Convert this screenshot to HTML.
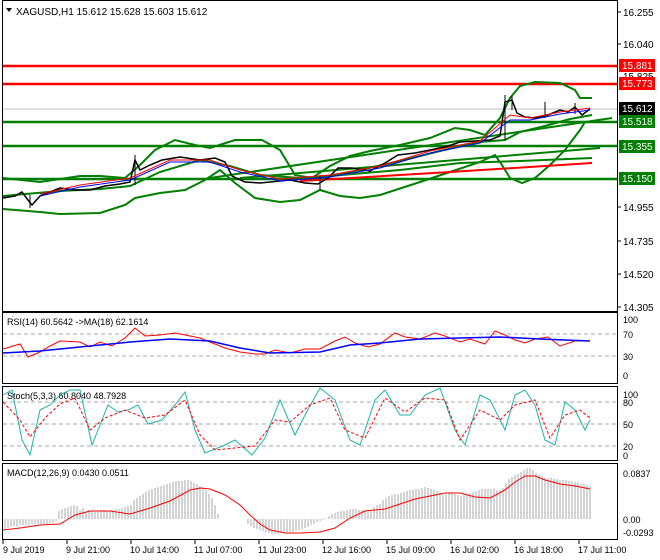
<!DOCTYPE html>
<html><head><meta charset="utf-8"><style>
html,body{margin:0;padding:0;background:#fff;}
svg{display:block;font-family:"Liberation Sans",sans-serif;}
</style></head><body>
<svg width="660" height="560" viewBox="0 0 660 560" xmlns="http://www.w3.org/2000/svg">
<rect width="660" height="560" fill="#fff"/>
<!-- panel frames -->
<g fill="none" stroke="#000" stroke-width="1">
<rect x="2.5" y="0.5" width="615" height="311"/>
<rect x="2.5" y="312.5" width="615" height="71"/>
<rect x="2.5" y="386.5" width="615" height="74"/>
<rect x="2.5" y="463.5" width="615" height="76"/>
</g>
<!-- price axis ticks -->
<g stroke="#000">
<line x1="618" y1="12" x2="621" y2="12"/><line x1="618" y1="44" x2="621" y2="44"/>
<line x1="618" y1="207" x2="621" y2="207"/><line x1="618" y1="241" x2="621" y2="241"/>
<line x1="618" y1="274" x2="621" y2="274"/><line x1="618" y1="307" x2="621" y2="307"/>
</g>
<g font-size="10" fill="#000">
<text x="623" y="16">16.255</text><text x="623" y="48">16.040</text>
<text x="623" y="80">15.825</text>
<text x="623" y="211">14.955</text><text x="623" y="245">14.735</text>
<text x="623" y="278">14.520</text><text x="623" y="311">14.305</text>
</g>
<!-- header -->
<path d="M6 8 L12 8 L9 12 Z" fill="#000"/>
<text x="16" y="15" font-size="10">XAGUSD,H1  15.612 15.628 15.603 15.612</text>
<!-- horizontal levels -->
<line x1="3" y1="109" x2="617" y2="109" stroke="#c0c0c0"/>
<g stroke-width="2.5">
<line x1="3" y1="66" x2="617" y2="66" stroke="#f00"/>
<line x1="3" y1="84" x2="617" y2="84" stroke="#f00"/>
<line x1="3" y1="122" x2="617" y2="122" stroke="#007f00"/>
<line x1="3" y1="146" x2="617" y2="146" stroke="#007f00"/>
<line x1="3" y1="179" x2="617" y2="179" stroke="#007f00"/>
</g>
<!-- price labels -->
<rect x="619" y="59" width="36" height="13" fill="#f00"/><text x="622" y="69" font-size="10" fill="#fff">15.881</text>
<rect x="619" y="77" width="36" height="13" fill="#f00"/><text x="622" y="87" font-size="10" fill="#fff">15.773</text>
<rect x="619" y="102" width="36" height="13" fill="#000"/><text x="622" y="112" font-size="10" fill="#fff">15.612</text>
<rect x="619" y="115" width="36" height="13" fill="#007f00"/><text x="622" y="125" font-size="10" fill="#fff">15.518</text>
<rect x="619" y="140" width="36" height="13" fill="#007f00"/><text x="622" y="150" font-size="10" fill="#fff">15.355</text>
<rect x="619" y="172" width="36" height="13" fill="#007f00"/><text x="622" y="182" font-size="10" fill="#fff">15.150</text>
<!-- bollinger -->
<g fill="none" stroke="#007f00" stroke-width="2">
<path d="M3,178 L40,182 L80,176 L100,176 L125,178 L140,165 L155,150 L175,140 L195,145 L210,148 L235,140 L262,140 L280,150 L295,175 L312,178 L330,166 L350,156 L370,151 L400,145 L430,138 L455,128 L470,130 L485,135 L500,118 L510,98 L520,86 L535,82 L560,83 L575,90 L580,98 L592,98"/>
<path d="M3,209 L40,212 L60,214 L100,213 L125,205 L135,198 L160,193 L185,190 L205,180 L220,170 L235,183 L255,198 L280,202 L300,200 L320,190 L340,196 L360,198 L380,195 L420,182 L450,172 L480,162 L495,155 L502,165 L510,178 L522,183 L535,178 L550,165 L565,150 L580,130 L585,122"/>
<path d="M3,196 L60,191 L100,189 L130,186 L160,172 L200,160 L230,166 L260,175 L300,178 L330,176 L360,170 L400,161 L440,151 L480,142 L505,140 L520,132 L545,126 L570,119 L592,115"/>
<path d="M210,178 L612,118"/>
<path d="M240,178 L600,148"/>
<path d="M330,176 L400,170 L460,163 L520,161 L592,158"/>
</g>
<path d="M300,181 L450,172 L592,163" fill="none" stroke="#f00" stroke-width="2"/>
<!-- price candles approx -->
<path d="M3,198 L15,196 L22,192 L28,200 L32,205 L40,196 L50,192 L60,188 L75,190 L90,190 L105,186 L120,184 L130,182 L135,160 L140,170 L150,165 L162,160 L180,157 L200,160 L215,158 L225,162 L232,176 L245,182 L260,183 L290,180 L305,183 L318,184 L328,178 L338,168 L352,168 L370,171 L385,163 L398,155 L415,153 L430,150 L445,147 L460,142 L475,141 L490,140 L500,136 L505,102 L512,100 L517,113 L525,117 L535,118 L548,115 L560,110 L568,112 L575,107 L582,115 L590,109" fill="none" stroke="#000" stroke-width="1.5"/>
<path d="M30,208 V195 M135,185 V155 M320,190 V175 M505,140 V95 M512,110 V96 M545,118 V102 M575,114 V103" stroke="#000"/>
<path d="M40,196 L80,187 L130,180 L170,162 L210,162 L240,172 L280,181 L330,177 L380,168 L430,153 L480,143 L510,120 L530,120 L560,114 L590,110" fill="none" stroke="#00f"/>
<path d="M40,194 L80,185 L130,178 L170,160 L210,160 L240,170 L280,179 L330,175 L380,166 L430,151 L480,141 L510,115 L530,118 L560,112 L590,108" fill="none" stroke="#f00"/>
<!-- RSI -->
<text x="7" y="325" font-size="9">RSI(14) 60.5642  -&gt;MA(18) 62.1614</text>
<g stroke="#aaa" stroke-dasharray="4,3"><line x1="3" y1="334" x2="617" y2="334"/><line x1="3" y1="356" x2="617" y2="356"/></g>
<g font-size="9"><text x="623" y="323">100</text><text x="623" y="338">70</text><text x="623" y="360">30</text><text x="623" y="379">0</text></g>
<path d="M3,349 L20,344 L28,357 L40,352 L50,346 L60,341 L80,342 L90,347 L100,342 L112,346 L125,338 L135,328 L145,336 L160,335 L175,333 L190,336 L200,338 L215,344 L225,348 L240,352 L255,354 L265,354 L275,350 L290,353 L305,349 L320,349 L335,341 L345,337 L355,343 L368,347 L380,344 L395,333 L405,337 L420,339 L435,333 L445,336 L460,342 L470,339 L485,344 L495,331 L505,335 L515,340 L525,343 L535,339 L548,337 L560,346 L575,341 L590,341" fill="none" stroke="#f00"/>
<path d="M3,353 L40,351 L80,347 L130,342 L170,339 L210,341 L240,348 L270,353 L320,352 L350,345 L380,343 L420,339 L460,338 L500,337 L540,339 L590,341" fill="none" stroke="#00f" stroke-width="1.5"/>
<!-- Stoch -->
<text x="7" y="399" font-size="9">Stoch(5,3,3) 60.8040 48.7928</text>
<g stroke="#aaa" stroke-dasharray="4,3"><line x1="3" y1="402" x2="617" y2="402"/><line x1="3" y1="424" x2="617" y2="424"/><line x1="3" y1="446" x2="617" y2="446"/></g>
<g font-size="9"><text x="623" y="398">100</text><text x="623" y="406">80</text><text x="623" y="428">50</text><text x="623" y="450">20</text><text x="623" y="459">0</text></g>
<path d="M3,395 L12,390 L22,440 L30,455 L40,410 L50,405 L60,395 L70,390 L80,390 L92,445 L100,425 L108,405 L118,412 L128,410 L138,405 L148,424 L162,420 L175,405 L185,392 L195,430 L205,453 L215,449 L225,445 L235,440 L252,455 L265,438 L280,400 L295,435 L305,415 L320,388 L335,400 L350,440 L360,445 L375,400 L385,390 L400,415 L410,415 L425,395 L440,388 L455,430 L465,445 L480,395 L490,400 L505,430 L515,395 L525,390 L535,405 L545,440 L555,445 L565,402 L575,410 L585,430 L590,420" fill="none" stroke="#20b2aa"/>
<path d="M3,402 L20,420 L30,437 L45,418 L60,404 L75,398 L90,430 L105,418 L125,410 L145,418 L165,415 L185,400 L200,435 L215,450 L235,448 L255,446 L275,420 L290,422 L310,405 L330,398 L345,430 L365,438 L385,398 L405,412 L425,398 L445,400 L460,440 L480,410 L500,420 L515,405 L535,400 L550,438 L565,415 L580,410 L590,418" fill="none" stroke="#f00" stroke-dasharray="3,2"/>
<!-- MACD -->
<text x="7" y="476" font-size="9">MACD(12,26,9) 0.0430 0.0511</text>
<g font-size="9"><text x="623" y="477">0.0837</text><text x="623" y="523">0.00</text><text x="623" y="536">-0.0293</text></g>
<path id="h" d="M5,519V530M8,519V528M11,519V527M14,519V526M17,519V526M20,519V525M23,519V525M26,519V525M29,519V525M32,519V524M35,519V524M38,519V524M41,519V524M44,519V524M47,519V524M50,519V523M53,519V523M56,519V521M59,519V511M62,519V509M65,519V508M68,519V507M71,519V506M74,519V505M77,519V506M80,519V510M83,519V508M86,519V512M89,519V510M92,519V511M95,519V512M98,519V511M101,519V510M104,519V510M107,519V511M110,519V510M113,519V510M116,519V509M119,519V509M122,519V508M125,519V507M128,519V506M131,519V505M134,519V500M137,519V498M140,519V496M143,519V494M146,519V492M149,519V490M152,519V489M155,519V488M158,519V487M161,519V486M164,519V485M167,519V484M170,519V483M173,519V482M176,519V481M179,519V481M182,519V481M185,519V480M188,519V480M191,519V481M194,519V483M197,519V484M200,519V486M203,519V487M206,519V490M209,519V494M212,519V498M215,519V505M218,519V514M221,519V519M248,519V524M251,519V526M254,519V528M257,519V529M260,519V530M263,519V531M266,519V532M269,519V533M272,519V534M275,519V534M278,519V533M281,519V533M284,519V533M287,519V532M290,519V532M293,519V532M296,519V531M299,519V530M302,519V529M305,519V528M308,519V527M311,519V525M314,519V524M317,519V522M320,519V521M323,519V520M326,519V518M329,519V516M332,519V514M335,519V513M338,519V512M341,519V511M344,519V511M347,519V510M350,519V509M353,519V509M356,519V509M359,519V510M362,519V510M365,519V510M368,519V511M371,519V510M374,519V507M377,519V505M380,519V504M383,519V500M386,519V498M389,519V496M392,519V495M395,519V494M398,519V494M401,519V493M404,519V492M407,519V491M410,519V490M413,519V490M416,519V489M419,519V489M422,519V488M425,519V487M428,519V488M431,519V489M434,519V490M437,519V491M440,519V493M443,519V495M446,519V494M449,519V493M452,519V493M455,519V494M458,519V495M461,519V496M464,519V495M467,519V494M470,519V493M473,519V492M476,519V491M479,519V490M482,519V489M485,519V489M488,519V489M491,519V489M494,519V489M497,519V490M500,519V490M503,519V488M506,519V483M509,519V479M512,519V477M515,519V475M518,519V474M521,519V472M524,519V470M527,519V468M530,519V468M533,519V470M536,519V473M539,519V475M542,519V476M545,519V478M548,519V478M551,519V478M554,519V479M557,519V479M560,519V480M563,519V480M566,519V480M569,519V481M572,519V481M575,519V482M578,519V482M581,519V484M584,519V484M587,519V485M590,519V486" stroke="#aaa"/>
<path d="M3,530 L20,528 L40,525 L60,524 L75,515 L90,511 L110,511 L130,514 L150,508 L170,501 L190,490 L200,488 L210,489 L225,495 L240,505 L250,515 L260,524 L270,530 L285,533 L300,533 L320,532 L335,528 L350,518 L365,511 L385,509 L400,504 L415,499 L430,496 L445,493 L460,493 L475,497 L490,498 L505,490 L515,482 L525,476 L535,476 L545,480 L560,484 L575,486 L590,489" fill="none" stroke="#f00"/>
<!-- time axis -->
<g stroke="#000"><line x1="3" y1="540" x2="3" y2="544"/><line x1="67" y1="540" x2="67" y2="544"/><line x1="131" y1="540" x2="131" y2="544"/><line x1="195" y1="540" x2="195" y2="544"/><line x1="259" y1="540" x2="259" y2="544"/><line x1="323" y1="540" x2="323" y2="544"/><line x1="387" y1="540" x2="387" y2="544"/><line x1="451" y1="540" x2="451" y2="544"/><line x1="515" y1="540" x2="515" y2="544"/><line x1="579" y1="540" x2="579" y2="544"/></g>
<g font-size="9">
<text x="3" y="553">9 Jul 2019</text><text x="66" y="553">9 Jul 21:00</text><text x="130" y="553">10 Jul 14:00</text><text x="194" y="553">11 Jul 07:00</text><text x="258" y="553">11 Jul 23:00</text><text x="322" y="553">12 Jul 16:00</text><text x="386" y="553">15 Jul 09:00</text><text x="450" y="553">16 Jul 02:00</text><text x="514" y="553">16 Jul 18:00</text><text x="578" y="553">17 Jul 11:00</text>
</g>
</svg>
</body></html>
